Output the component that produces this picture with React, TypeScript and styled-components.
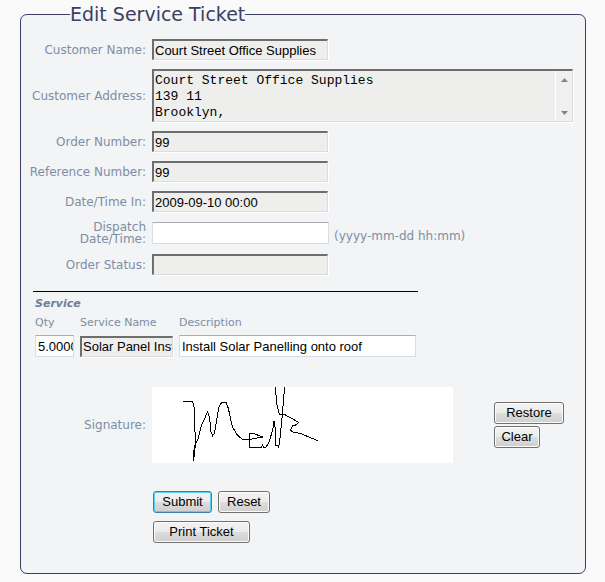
import React, { useState } from "react";
import styled, { createGlobalStyle, css } from "styled-components";

const INK = "#3b3f63";
const LABEL = "#7d8ea4";
const PANEL = "#f2f4f6";

const GlobalStyle = createGlobalStyle`
  *, *::before, *::after { box-sizing: border-box; }
  body {
    margin: 0;
    background: #fafafa;
    color: ${LABEL};
    font: 12px/12px Verdana, "DejaVu Sans", sans-serif;
  }
`;

const Page = styled.main`
  padding: 5px 19px 8px 20px;
`;

const Form = styled.form`
  margin: 0;
`;

const Panel = styled.fieldset`
  min-width: 0;
  margin: 0;
  padding: 16px 12px 30px 8px;
  border: 1px solid ${INK};
  border-radius: 7px;
  background: ${PANEL};
`;

const Title = styled.legend`
  margin-left: 41px;
  padding: 0;
  color: ${INK};
  font: 19px/18px "DejaVu Sans", sans-serif;
`;

const Rows = styled.div`
  display: flex;
  flex-direction: column;
  gap: 9px;
`;

const Row = styled.div`
  display: grid;
  grid-template-columns: 117px minmax(0, 1fr);
  column-gap: 6px;
  align-items: center;
`;

const Label = styled.label`
  text-align: right;
`;

const FieldGroup = styled.div`
  display: flex;
  align-items: center;
  gap: 5px;
`;

const sunken = css`
  border: 1px solid;
  border-width: 2px 1px 1px 2px;
  border-color: #6e6e6e #dcdcdc #dcdcdc #6e6e6e;
  background: #eeeeec;
  box-shadow: 1px 1px 0 #fff;
`;

const TextInput = styled.input<{ $width: number }>`
  width: ${(p) => p.$width}px;
  height: 22px;
  margin: 0;
  padding: 0 0 0 2px;
  border: 1px solid #d9dde3;
  border-top-color: #abadb3;
  border-radius: 0;
  background: #fff;
  color: #000;
  font: 13px/16px Arial, "Liberation Sans", sans-serif;
  &:read-only {
    height: 21px;
    padding: 0 0 0 1px;
    ${sunken}
  }
`;

const AddressFrame = styled.div`
  display: flex;
  height: 53px;
  ${sunken}
`;

const AddressInput = styled.textarea`
  flex: 1;
  min-width: 0;
  margin: 0;
  padding: 2px 1px 0;
  border: 0;
  background: transparent;
  color: #000;
  font: 13px/16px "Courier New", "Liberation Mono", monospace;
  resize: none;
  overflow: hidden;
`;

const ScrollTrack = styled.div`
  display: flex;
  flex-direction: column;
  justify-content: space-between;
  align-items: center;
  width: 17px;
  padding: 7px 0 6px;
  border-left: 1px solid #fff;
  background: #f0f0f0;
`;

const Arrow = styled.svg`
  display: block;
  width: 7px;
  height: 4px;
  fill: #868686;
`;

const Service = styled.section`
  margin: 16px 0 0 4px;
`;

const Rule = styled.hr`
  width: 385px;
  max-width: 100%;
  height: 1px;
  margin: 0;
  border: 0;
  background: #000;
`;

const ServiceHeading = styled.h2`
  margin: 6px 0 0 2px;
  color: #6d7f96;
  font: italic bold 11px/12px Verdana, "DejaVu Sans", sans-serif;
`;

const ServiceTable = styled.table`
  margin: 7px 0 0 2px;
  border-collapse: collapse;
`;

const HeadCell = styled.th`
  padding: 0 6px 6px 0;
  font-size: 11px;
  font-weight: normal;
  text-align: left;
  line-height: 12px;
`;

const Cell = styled.td`
  padding: 0 6px 0 0;
  line-height: 0;
  vertical-align: middle;
`;

const SignatureRow = styled(Row)`
  margin-top: 30px;
`;

const SignatureArea = styled.div`
  display: flex;
  align-items: center;
  gap: 41px;
`;

const Pad = styled.svg`
  display: block;
  flex: none;
  width: 301px;
  height: 76px;
  background: #fff;
`;

const ButtonStack = styled.div<{ $gap: number }>`
  display: flex;
  flex-direction: column;
  align-items: flex-start;
  gap: ${(p) => p.$gap}px;
`;

const ButtonLine = styled.div`
  display: flex;
  gap: 6px;
`;

const Button = styled.button<{ $width: number; $primary?: boolean }>`
  width: ${(p) => p.$width}px;
  height: 22px;
  margin: 0;
  padding: 0;
  border: 1px solid ${(p) => (p.$primary ? "#3c7fb1" : "#707070")};
  border-radius: 3px;
  background: linear-gradient(#f3f3f3, #ebebeb 50%, #dddddd 50%, #cfcfcf);
  box-shadow: inset 0 0 0 1px ${(p) => (p.$primary ? "#5fcdee" : "#fbfbfb")};
  color: #000;
  font: 13px/16px Arial, "Liberation Sans", sans-serif;
`;

const Actions = styled.div`
  margin: 28px 0 0 124px;
`;

const HintText = styled.span`
  padding-top: 6px;
`;

type FieldProps = {
  id: string;
  label: string;
  value?: string;
  editable?: boolean;
  hint?: string;
};

function Field({ id, label, value = "", editable = false, hint }: FieldProps) {
  return (
    <Row>
      <Label htmlFor={id}>{label}</Label>
      <FieldGroup>
        <TextInput id={id} type="text" defaultValue={value} readOnly={!editable} $width={editable ? 177 : 176} />
        {hint && <HintText>{hint}</HintText>}
      </FieldGroup>
    </Row>
  );
}

const STROKES = [
  "99,79 128,79 132,95 134,150 137,205 134,225 131,257 131,232 136,205 143,195 154,152 165,128 173,110 179,128 182,168 188,182 193,176 205,105 208,92 216,82 228,82 235,100 247,155 262,180 277,193 300,193 320,189 338,186 315,177 298,174 298,216 334,217 337,210 341,217 348,216 356,205 368,165 372,139 376,160 377,212 384,211 386,218 390,190 397,120 400,80 404,36",
  "376,36 380,85 388,118 403,118 446,142 440,149 427,153 421,165 428,171 450,175 503,197",
];

export default function App() {
  const [signed, setSigned] = useState(true);
  return (
    <>
      <GlobalStyle />
      <Page>
        <Form onSubmit={(e) => e.preventDefault()}>
          <Panel>
            <Title>Edit Service Ticket</Title>
            <Rows>
              <Field id="name" label="Customer Name:" value="Court Street Office Supplies" />
              <Row>
                <Label htmlFor="address">Customer Address:</Label>
                <AddressFrame>
                  <AddressInput id="address" readOnly defaultValue={"Court Street Office Supplies\n139 11\nBrooklyn,"} />
                  <ScrollTrack aria-hidden="true">
                    <Arrow viewBox="0 0 7 4"><path d="M0 4 3.5 0 7 4z" /></Arrow>
                    <Arrow viewBox="0 0 7 4"><path d="M0 0h7L3.5 4z" /></Arrow>
                  </ScrollTrack>
                </AddressFrame>
              </Row>
              <Field id="order" label="Order Number:" value="99" />
              <Field id="reference" label="Reference Number:" value="99" />
              <Field id="received" label="Date/Time In:" value="2009-09-10 00:00" />
              <Field id="dispatch" label="Dispatch Date/Time:" editable hint="(yyyy-mm-dd hh:mm)" />
              <Field id="status" label="Order Status:" />
            </Rows>
            <Service>
              <Rule />
              <ServiceHeading>Service</ServiceHeading>
              <ServiceTable>
                <thead>
                  <tr>
                    <HeadCell scope="col" id="qty">Qty</HeadCell>
                    <HeadCell scope="col" id="service-name">Service Name</HeadCell>
                    <HeadCell scope="col" id="description">Description</HeadCell>
                  </tr>
                </thead>
                <tbody>
                  <tr>
                    <Cell><TextInput aria-labelledby="qty" defaultValue="5.0000" $width={39} /></Cell>
                    <Cell><TextInput aria-labelledby="service-name" readOnly defaultValue="Solar Panel Install" $width={93} /></Cell>
                    <Cell><TextInput aria-labelledby="description" defaultValue="Install Solar Panelling onto roof" $width={237} /></Cell>
                  </tr>
                </tbody>
              </ServiceTable>
            </Service>
            <SignatureRow>
              <Label as="span">Signature:</Label>
              <SignatureArea>
                <Pad viewBox="6 36 903 228" role="img" aria-label="Signature" shapeRendering="crispEdges">
                  {signed &&
                    STROKES.map((points) => (
                      <polyline key={points} points={points} fill="none" stroke="#000" strokeWidth="3" />
                    ))}
                </Pad>
                <ButtonStack $gap={2}>
                  <Button type="button" $width={70} onClick={() => setSigned(true)}>Restore</Button>
                  <Button type="button" $width={46} onClick={() => setSigned(false)}>Clear</Button>
                </ButtonStack>
              </SignatureArea>
            </SignatureRow>
            <Actions>
              <ButtonStack $gap={8}>
                <ButtonLine>
                  <Button type="submit" $width={59} $primary>Submit</Button>
                  <Button type="reset" $width={52}>Reset</Button>
                </ButtonLine>
                <Button type="button" $width={97}>Print Ticket</Button>
              </ButtonStack>
            </Actions>
          </Panel>
        </Form>
      </Page>
    </>
  );
}
